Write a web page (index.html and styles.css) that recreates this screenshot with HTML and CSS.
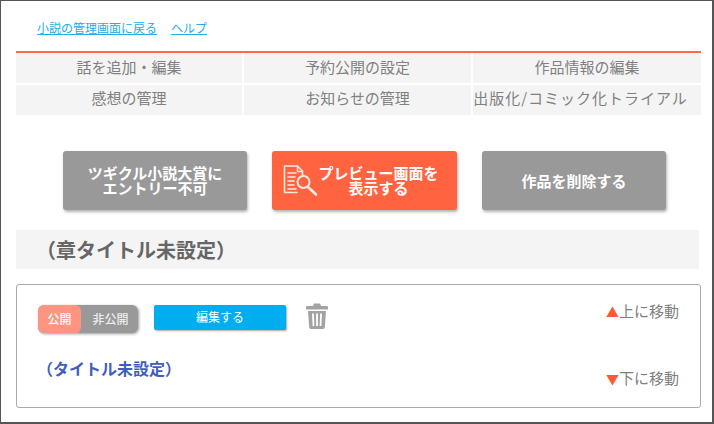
FILE: index.html
```html
<!DOCTYPE html>
<html lang="ja">
<head>
<meta charset="utf-8">
<title>小説の管理</title>
<link rel="stylesheet" href="styles.css">
</head>
<body>
<div class="frame">
  <nav class="links"><a href="#">小説の管理画面に戻る</a><a href="#">ヘルプ</a></nav>
  <div class="tabs">
    <a class="tab" href="#">話を追加・編集</a>
    <a class="tab" href="#">予約公開の設定</a>
    <a class="tab" href="#">作品情報の編集</a>
    <a class="tab" href="#">感想の管理</a>
    <a class="tab" href="#">お知らせの管理</a>
    <a class="tab tab-wide" href="#">出版化/コミック化トライアル</a>
  </div>
  <div class="actions">
    <a class="action gray" href="#">ツギクル小説大賞に<br>エントリー不可</a>
    <a class="action orange" href="#">
      <svg class="doc-icon" viewBox="0 0 35 31" fill="none" stroke="#ffe9e3" stroke-width="1.500" stroke-linecap="round" stroke-linejoin="round">
        <path d="M14 27.500H1.500V1h13l5 5v4"/>
        <path d="M14.500 1.500V6.500H19.500"/>
        <path d="M5 8h8M5 12h7M5 16h6M5 20h6M5 24h8"/>
        <circle cx="20.500" cy="17" r="6" stroke-width="2"/>
        <path d="M25 22l8 7.500" stroke-width="2.600"/>
      </svg>
      <span class="action-label">プレビュー画面を<br>表示する</span>
    </a>
    <a class="action gray" href="#">作品を削除する</a>
  </div>
  <h2 class="chapter">（章タイトル未設定）</h2>
  <section class="card">
    <div class="card-main">
      <div class="controls">
        <div class="toggle"><span class="on">公開</span><span class="off">非公開</span></div>
        <a class="edit" href="#">編集する</a>
        <svg class="trash" viewBox="0 0 22 26" fill="#a3a3a3">
          <path d="M8 0.500h6l1 2.500h6a1 1 0 0 1 1 1v2.500H0V4a1 1 0 0 1 1-1h6z"/>
          <path fill-rule="evenodd" d="M2 8h18l-1.200 16.200a1.800 1.800 0 0 1-1.800 1.800H5a1.800 1.800 0 0 1-1.800-1.800zM6 10.500l.6 12.500h1.800l-.6-12.500zM10.100 10.500v12.500h1.800v-12.500zM14.200 10.500l-.6 12.500h1.800l.6-12.500z"/>
        </svg>
      </div>
      <a class="title" href="#">（タイトル未設定）</a>
    </div>
    <div class="moves">
      <a class="move" href="#"><span class="arrow">▲</span>上に移動</a>
      <a class="move" href="#"><span class="arrow">▼</span>下に移動</a>
    </div>
  </section>
</div>
</body>
</html>
```
FILE: styles.css
```css
* { box-sizing: border-box; }
html, body { margin: 0; padding: 0; }
body {
  font-family: "Noto Sans CJK JP", "Noto Sans", sans-serif;
  background: #fff;
  color: #777;
}
a { text-decoration: none; color: inherit; }
.frame {
  width: 714px;
  height: 424px;
  border: 1px solid #555;
  border-width: 1px 2px 2px 1px;
  padding: 0 11px 0 15px;
  overflow: hidden;
}
.links {
  display: flex;
  gap: 14px;
  height: 50px;
  padding: 18px 0 0 21px;
  font-size: 12px;
  line-height: 18px;
}
.links a { color: #25ace9; text-decoration: underline; }
.tabs {
  display: grid;
  grid-template-columns: 226px 227px 228px;
  grid-auto-rows: 30px;
  gap: 1.500px 2px;
  width: 685px;
  border-top: 2px solid #ff6b4a;
}
.tab {
  display: flex;
  align-items: center;
  justify-content: center;
  padding-bottom: 4px;
  background: #f4f4f4;
  font-size: 15px;
  color: #808080;
}
.tab-wide { letter-spacing: 1px; padding-right: 13px; white-space: nowrap; }
.actions {
  display: grid;
  grid-template-columns: 184px 185px 184px;
  gap: 25px;
  padding: 36px 0 0 47px;
}
.action {
  display: flex;
  align-items: center;
  justify-content: center;
  height: 59px;
  border-radius: 3px;
  box-shadow: 1px 2px 3px rgba(0, 0, 0, 0.3);
  color: #fff;
  font-size: 15px;
  font-weight: 700;
  line-height: 15px;
  text-align: center;
}
.gray { background: #999; }
.orange { background: #ff6340; gap: 0; justify-content: flex-start; padding-left: 11px; }
.doc-icon { width: 35px; height: 31px; flex: none; }
.action-label { width: 121px; }
.chapter {
  width: 683px;
  height: 39px;
  margin: 20px 0 0;
  padding-left: 20px;
  background: #f4f4f4;
  color: #666;
  font-size: 20px;
  font-weight: 700;
  line-height: 39px;
}
.card {
  display: flex;
  justify-content: space-between;
  width: 685px;
  height: 124px;
  margin-top: 15px;
  border: 1px solid #aaa;
  border-radius: 3px;
  padding: 20px 21px 0 20px;
}
.controls { display: flex; align-items: flex-start; padding-left: 1px; }
.toggle {
  display: flex;
  width: 100px;
  height: 28px;
  background: #999;
  border-radius: 6px;
  box-shadow: 1px 1px 3px rgba(0, 0, 0, 0.4);
  color: #fff;
  font-size: 12px;
  font-weight: 500;
  line-height: 27px;
}
.on {
  width: 43px;
  background: #ff9580;
  border-radius: 6px;
  text-align: center;
}
.off { flex: 1; text-align: center; color: #eee; padding-left: 2px; }
.edit {
  width: 132px;
  height: 25px;
  margin-left: 16px;
  background: #00aeef;
  border-radius: 2px;
  box-shadow: 1px 1px 2px rgba(0, 0, 0, 0.35);
  color: #fff;
  font-size: 12px;
  line-height: 24px;
  text-align: center;
}
.trash { width: 22px; height: 26px; margin: -2px 0 0 20px; }
.title {
  display: block;
  margin-top: 23px;
  color: #3f5fbd;
  font-size: 16px;
  font-weight: 700;
  line-height: 24px;
}
.moves {
  display: flex;
  flex-direction: column;
  gap: 45px;
  margin-top: -5px;
}
.move { font-size: 15px; line-height: 21px; color: #808080; }
.arrow { color: #ff5a36; font-size: 13px; }
```
